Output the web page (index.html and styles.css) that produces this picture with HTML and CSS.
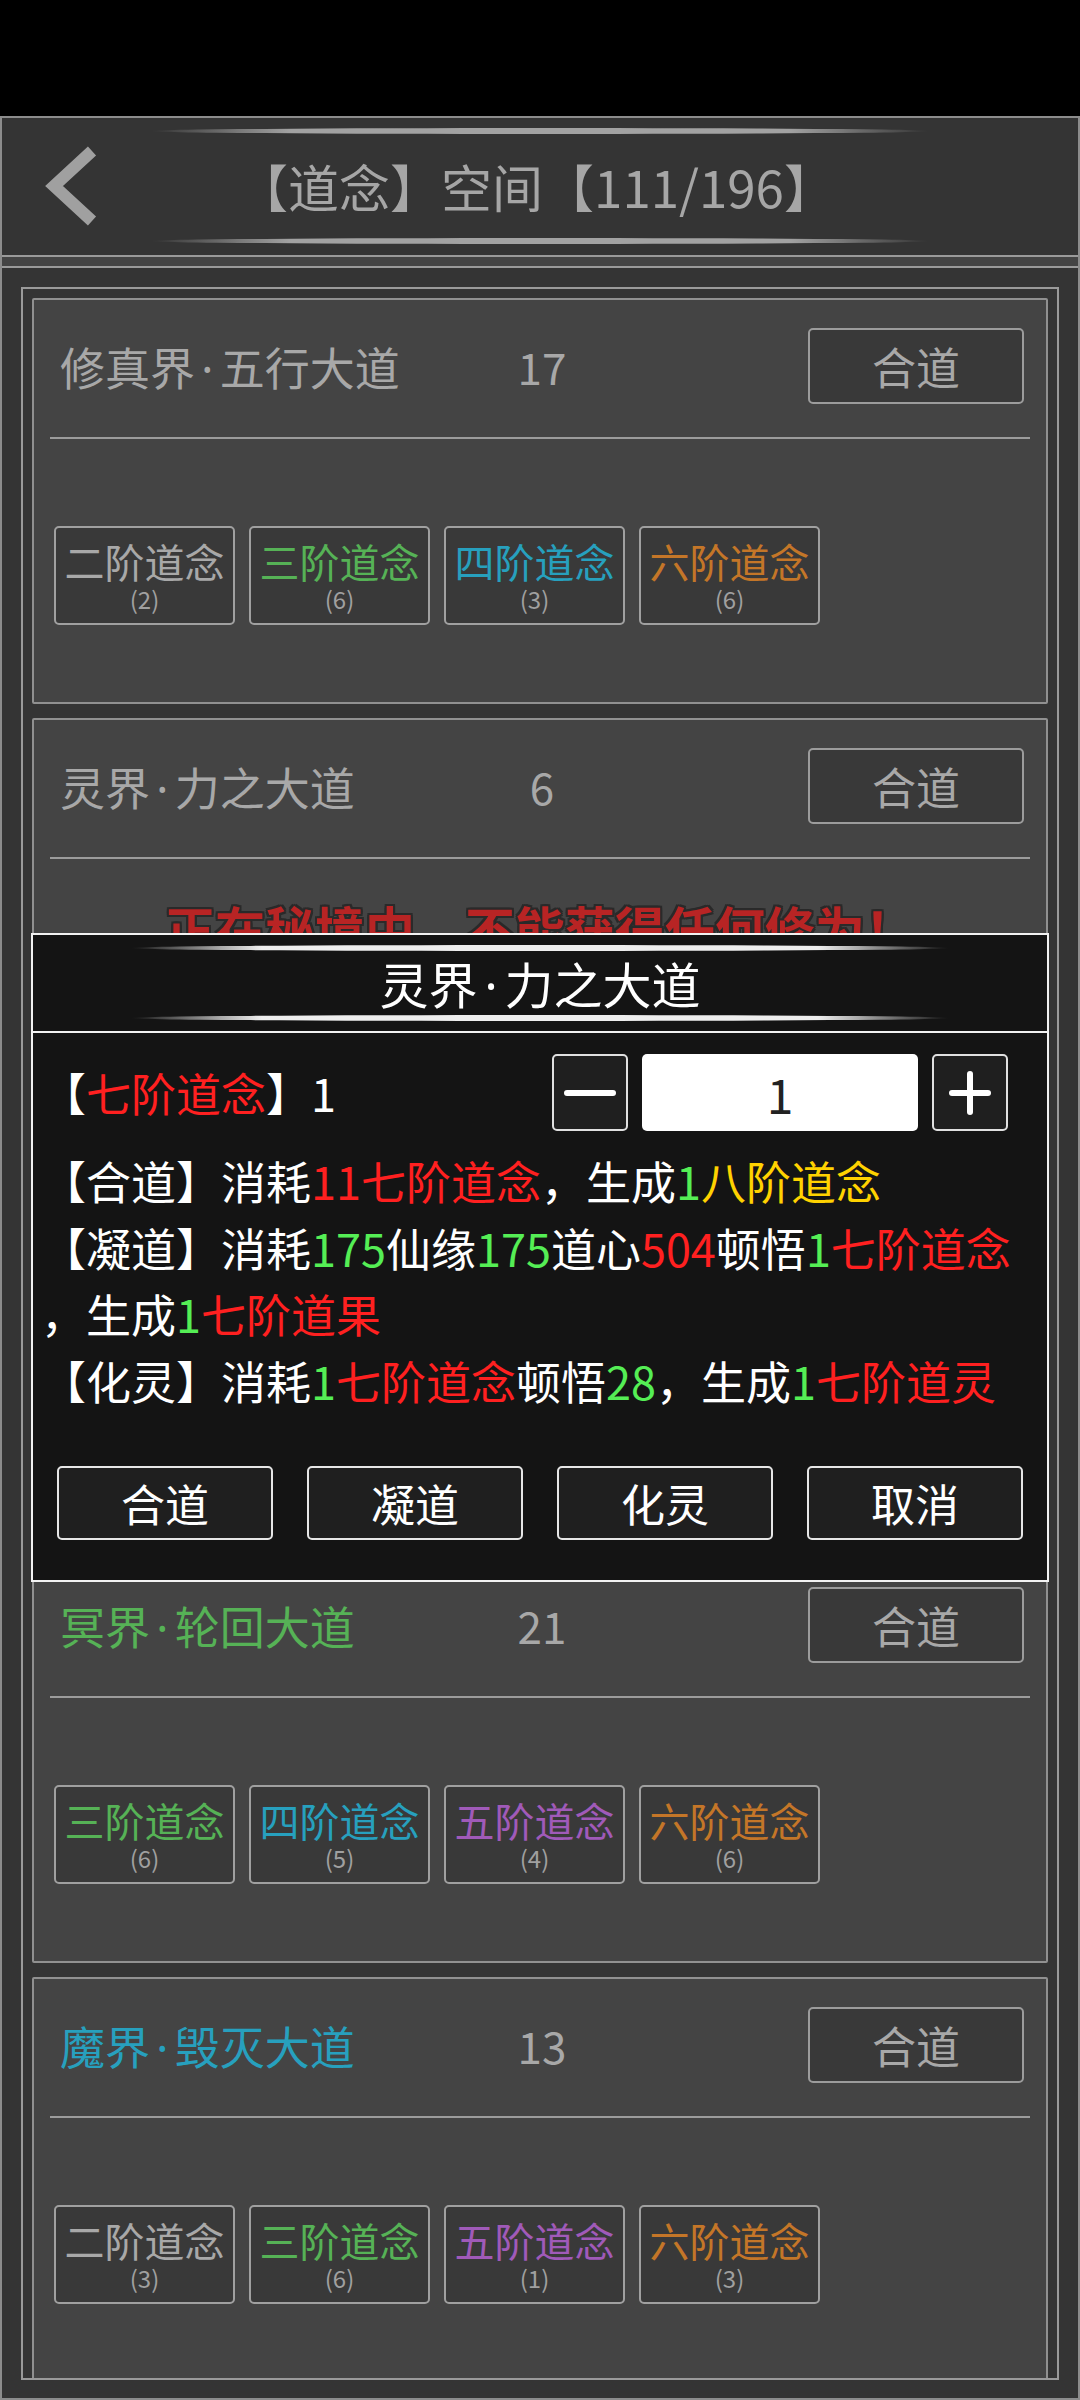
FILE: index.html
```html
<!DOCTYPE html>
<html>
	<head>
		<meta charset="UTF-8">
		<title>道念空间</title>
		<link rel="stylesheet" href="styles.css">
	</head>
	<body>
		<div class="statusbar"></div>
		<div id="screen">
			<!-- 顶部标题 -->
			<div class="topbar">
				<div class="deco"></div>
				<div class="topbar-row">
					<a href="javascript:;" class="back">
						<svg width="56" height="80" viewBox="0 0 56 80"><polyline points="48,5 10,40 48,75" fill="none" stroke="#a0a0a0" stroke-width="12" stroke-linejoin="miter"/></svg>
					</a>
					<h1>【道念】空间【111/196】</h1>
					<span></span>
				</div>
				<div class="deco"></div>
			</div>
			<div class="band"></div>

			<!-- 列表 -->
			<div class="frame">
				<ul class="list">
					<li class="card">
						<div class="card-head">
							<span class="card-name">修真界<i class="dot">·</i>五行大道</span>
							<span class="card-num">17</span>
							<a href="javascript:;" class="btn">合道</a>
						</div>
						<div class="card-line"></div>
						<div class="card-body">
							<div class="tags">
								<a href="javascript:;" class="tag c2">二阶道念<em>(2)</em></a>
								<a href="javascript:;" class="tag c3">三阶道念<em>(6)</em></a>
								<a href="javascript:;" class="tag c4">四阶道念<em>(3)</em></a>
								<a href="javascript:;" class="tag c6">六阶道念<em>(6)</em></a>
							</div>
						</div>
					</li>
					<li class="card">
						<div class="card-head">
							<span class="card-name">灵界<i class="dot">·</i>力之大道</span>
							<span class="card-num">6</span>
							<a href="javascript:;" class="btn">合道</a>
						</div>
						<div class="card-line"></div>
						<div class="card-body sealed">
							<p class="notice">正在秘境中，不能获得任何修为！</p>
						</div>
					</li>
					<li class="card">
						<div class="card-head">
							<span class="card-name c3">冥界<i class="dot">·</i>轮回大道</span>
							<span class="card-num">21</span>
							<a href="javascript:;" class="btn">合道</a>
						</div>
						<div class="card-line"></div>
						<div class="card-body">
							<div class="tags">
								<a href="javascript:;" class="tag c3">三阶道念<em>(6)</em></a>
								<a href="javascript:;" class="tag c4">四阶道念<em>(5)</em></a>
								<a href="javascript:;" class="tag c5">五阶道念<em>(4)</em></a>
								<a href="javascript:;" class="tag c6">六阶道念<em>(6)</em></a>
							</div>
						</div>
					</li>
					<li class="card">
						<div class="card-head">
							<span class="card-name c4">魔界<i class="dot">·</i>毁灭大道</span>
							<span class="card-num">13</span>
							<a href="javascript:;" class="btn">合道</a>
						</div>
						<div class="card-line"></div>
						<div class="card-body">
							<div class="tags">
								<a href="javascript:;" class="tag c2">二阶道念<em>(3)</em></a>
								<a href="javascript:;" class="tag c3">三阶道念<em>(6)</em></a>
								<a href="javascript:;" class="tag c5">五阶道念<em>(1)</em></a>
								<a href="javascript:;" class="tag c6">六阶道念<em>(3)</em></a>
							</div>
						</div>
					</li>
				</ul>
			</div>

			<!-- 弹窗 -->
			<div class="modal">
				<div class="modal-head">
					<div class="modal-deco"></div>
					<div class="modal-title">灵界<i class="dot">·</i>力之大道</div>
					<div class="modal-deco"></div>
				</div>
				<div class="modal-body">
					<div class="pick">
						<span class="pick-label">【<i class="red">七阶道念</i>】1</span>
						<div class="stepper">
							<a href="javascript:;" class="step">
								<svg width="60" height="12" viewBox="0 0 60 12"><line x1="7" y1="6" x2="53" y2="6" stroke="#fff" stroke-width="6" stroke-linecap="round"/></svg>
							</a>
							<div class="count-box">1</div>
							<a href="javascript:;" class="step">
								<svg width="46" height="46" viewBox="0 0 46 46"><line x1="5" y1="23" x2="41" y2="23" stroke="#fff" stroke-width="6" stroke-linecap="round"/><line x1="23" y1="4" x2="23" y2="42" stroke="#fff" stroke-width="6" stroke-linecap="round"/></svg>
							</a>
						</div>
					</div>
					<div class="recipe">
						<p>【合道】消耗<i class="red">11七阶道念</i>，生成<i class="green">1</i><i class="yellow">八阶道念</i></p>
						<p>【凝道】消耗<i class="green">175</i>仙缘<i class="green">175</i>道心<i class="red">504</i>顿悟<i class="green">1</i><i class="red">七阶道念</i><br>，生成<i class="green">1</i><i class="red">七阶道果</i></p>
						<p>【化灵】消耗<i class="green">1</i><i class="red">七阶道念</i>顿悟<i class="green">28</i>，生成<i class="green">1</i><i class="red">七阶道灵</i></p>
					</div>
					<div class="actions">
						<a href="javascript:;">合道</a>
						<a href="javascript:;">凝道</a>
						<a href="javascript:;">化灵</a>
						<a href="javascript:;">取消</a>
					</div>
				</div>
			</div>
		</div>
	</body>
</html>
```

FILE: styles.css
```css
body{
	margin: 0;
	background: #000;
	font-family: "Noto Sans CJK SC", "Noto Sans", sans-serif;
}
ul,p,h1{
	margin: 0;
	padding: 0;
}
li{
	list-style: none;
}
a{
	text-decoration: none;
	color: inherit;
}
i,em{
	font-style: normal;
}
.dot{
	font-family: "Noto Sans", sans-serif;
	padding: 0 0.14em;
}
.statusbar{
	height: 116px;
	background: #000;
}
#screen{
	position: relative;
	height: 2284px;
	box-sizing: border-box;
	border: 2px solid #8c8c8c;
	background: #343434;
	display: flex;
	flex-direction: column;
}
.topbar{
	padding: 10px 0 11px;
	border-bottom: 2px solid #9a9a9a;
}
.deco{
	width: 778px;
	height: 6px;
	margin: 0 auto;
	border-radius: 50%;
	background: linear-gradient(90deg, rgba(160,160,160,0), #a2a2a2 18%, #a2a2a2 82%, rgba(160,160,160,0));
}
.topbar-row{
	height: 104px;
	display: grid;
	grid-template-columns: 1fr auto 1fr;
	align-items: center;
}
.back{
	padding-left: 42px;
	height: 80px;
}
.back svg{
	display: block;
}
.topbar-row h1{
	font-size: 51px;
	font-weight: normal;
	color: #a6a6a6;
	line-height: 104px;
	margin-right: 8px;
}
.band{
	height: 9px;
	background: #444;
	border-bottom: 2px solid #9a9a9a;
}
.frame{
	flex: 1;
	min-height: 0;
	overflow: hidden;
	margin: 19px 19px 18px;
	border: 2px solid #9a9a9a;
	padding: 9px;
}
.card{
	background: #444;
	border: 2px solid #909090;
	border-radius: 2px;
	margin-bottom: 14px;
}
.card-head{
	display: grid;
	grid-template-columns: 1fr auto 1fr;
	align-items: center;
	padding: 28px 22px 0 26px;
	font-size: 44px;
	color: #a8a8a8;
}
.card-name{
	font-size: 45px;
}
.card-num{
	text-align: center;
}
.btn{
	justify-self: end;
	width: 216px;
	height: 76px;
	box-sizing: border-box;
	border: 2px solid #9c9c9c;
	border-radius: 5px;
	background: #393939;
	display: flex;
	align-items: center;
	justify-content: center;
}
.card-line{
	height: 2px;
	margin: 33px 16px 0;
	background: #9c9c9c;
}
.card-body{
	height: 263px;
	box-sizing: border-box;
	padding: 87px 0 0 20px;
}
.card-body.sealed{
	height: 682px;
	padding: 33px 0 0;
}
.notice{
	font-size: 50px;
	font-weight: bold;
	line-height: 70px;
	text-align: center;
	color: #b82424;
	text-shadow: 2px 0 #2a2a2a, -2px 0 #2a2a2a, 0 2px #2a2a2a, 0 -2px #2a2a2a, 2px 2px #2a2a2a, -2px -2px #2a2a2a, 2px -2px #2a2a2a, -2px 2px #2a2a2a;
}
.tags{
	display: flex;
	gap: 14px;
}
.tag{
	width: 181px;
	height: 99px;
	box-sizing: border-box;
	border: 2px solid #a0a0a0;
	border-radius: 5px;
	background: #393939;
	padding-top: 8px;
	text-align: center;
	font-size: 40px;
	line-height: 50px;
}
.tag em{
	display: block;
	font-size: 24px;
	line-height: 26px;
	color: #a0a0a0;
}
.c2{ color: #a8a8a8; }
.c3{ color: #56b256; }
.c4{ color: #27a0be; }
.c5{ color: #a05ab9; }
.c6{ color: #c47628; }

.modal{
	position: absolute;
	left: 29px;
	top: 815px;
	width: 1018px;
	height: 649px;
	box-sizing: border-box;
	border: 2px solid #f2f2f2;
	background: #141414;
	color: #fff;
}
.modal-head{
	padding: 10px 0;
	border-bottom: 2px solid #f2f2f2;
}
.modal-deco{
	width: 818px;
	height: 6px;
	margin: 0 auto;
	border-radius: 50%;
	background: linear-gradient(90deg, rgba(238,238,238,0), #eee 16%, #eee 84%, rgba(238,238,238,0));
}
.modal-title{
	height: 64px;
	line-height: 64px;
	text-align: center;
	font-size: 49px;
}
.modal-body{
	padding-top: 21px;
	font-size: 45px;
}
.pick{
	display: flex;
	align-items: center;
	padding: 0 39px 0 8px;
}
.pick-label{
	flex: 1;
}
.stepper{
	display: flex;
	gap: 14px;
}
.step{
	width: 76px;
	height: 77px;
	box-sizing: border-box;
	border: 2px solid #e0e0e0;
	border-radius: 5px;
	background: #1f1f1f;
	display: flex;
	align-items: center;
	justify-content: center;
}
.step svg{
	display: block;
}
.count-box{
	width: 276px;
	height: 77px;
	border-radius: 5px;
	background: #fff;
	color: #222;
	font-size: 48px;
	display: flex;
	align-items: center;
	justify-content: center;
}
.recipe{
	margin-top: 17px;
	padding-left: 8px;
	line-height: 66.7px;
	white-space: nowrap;
}
.red{ color: #ff2020; }
.green{ color: #55ee55; }
.yellow{ color: #ffd200; }
.actions{
	display: flex;
	justify-content: space-between;
	margin-top: 51px;
	padding: 0 24px;
}
.actions a{
	width: 216px;
	height: 74px;
	box-sizing: border-box;
	border: 2px solid #e6e6e6;
	border-radius: 5px;
	background: #1f1f1f;
	font-size: 44px;
	display: flex;
	align-items: center;
	justify-content: center;
}
```
